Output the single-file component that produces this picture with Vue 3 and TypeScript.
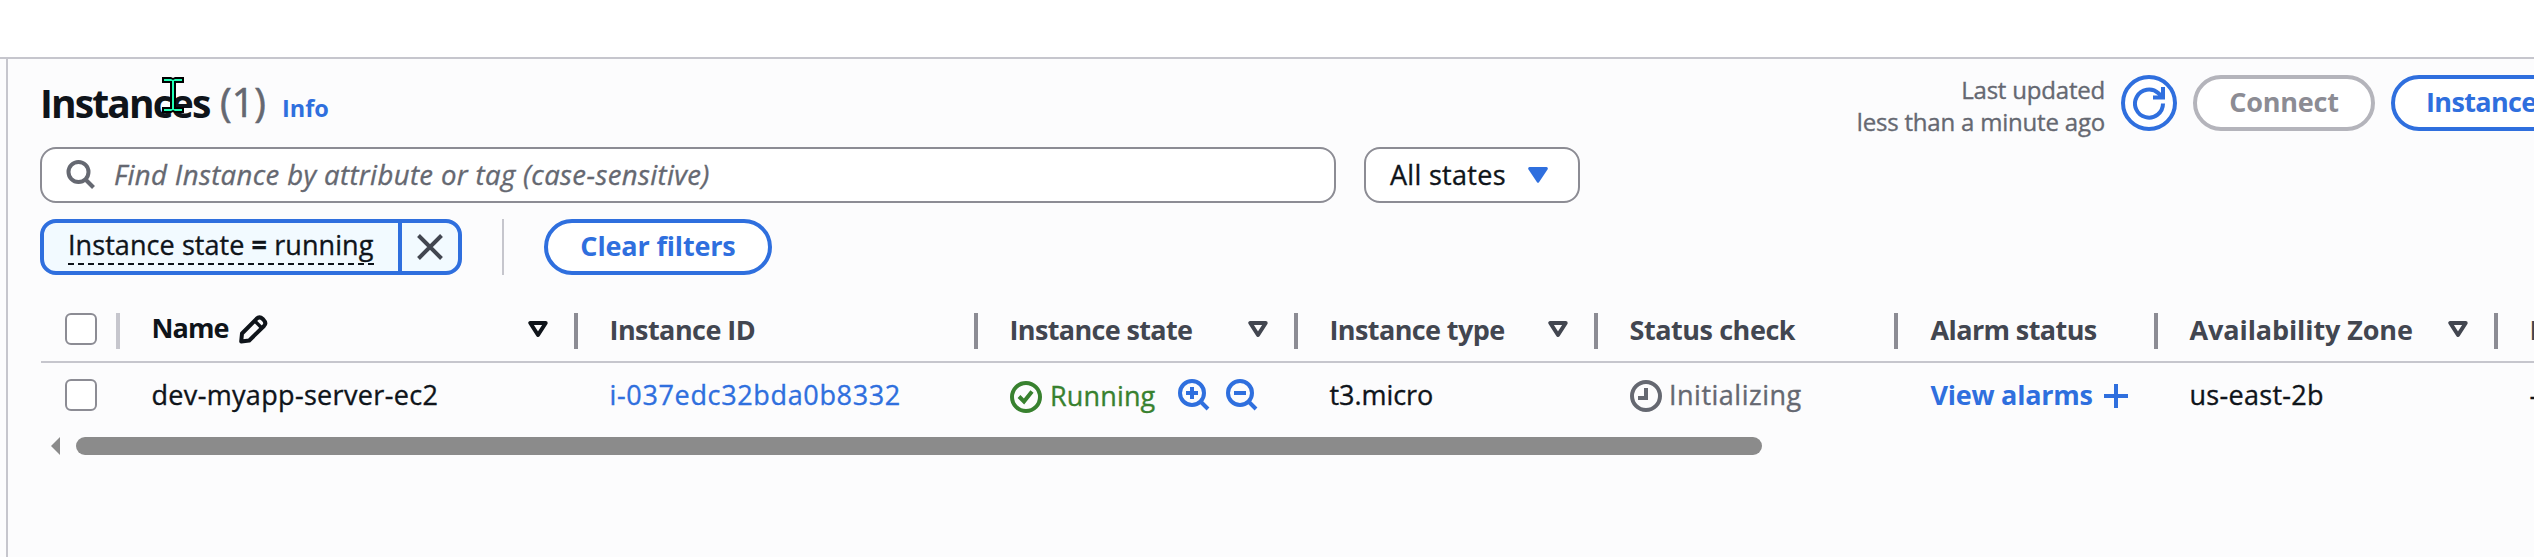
<script setup lang="ts">
import { ref } from 'vue'

interface Column {
  key: string
  label: string
  sortable?: boolean
  editable?: boolean
}

const columns: Column[] = [
  { key: 'name', label: 'Name', sortable: true, editable: true },
  { key: 'id', label: 'Instance ID' },
  { key: 'state', label: 'Instance state', sortable: true },
  { key: 'type', label: 'Instance type', sortable: true },
  { key: 'check', label: 'Status check' },
  { key: 'alarm', label: 'Alarm status' },
  { key: 'zone', label: 'Availability Zone', sortable: true },
  { key: 'dns', label: 'Public IPv4 DNS' },
]

const query = ref('')
</script>

<template>
  <main class="page">
    <section class="panel">
      <header class="header">
        <h1 class="title">Instances</h1>
        <span class="count">(1)</span>
        <a class="info">Info</a>
        <div class="actions">
          <p class="updated"><span class="up1">Last updated</span><br /><span class="up2">less than a minute ago</span></p>
          <button class="btn round" aria-label="Refresh">
            <svg width="32" height="33" viewBox="0 0 32 33" fill="none">
              <path d="M30 16.5A14 14 0 1 1 25.5 6.3L29 9.8" stroke="currentColor" stroke-width="4" />
              <path d="M28 0h4v12.500H20v-4h5L28 6z" fill="currentColor" />
            </svg>
          </button>
          <button class="btn disabled" disabled>Connect</button>
          <button class="btn state-btn">Instance state</button>
        </div>
      </header>

      <div class="filters">
        <label class="search">
          <svg width="30" height="30" viewBox="0 0 30 30" fill="none" stroke="#656871" stroke-width="4">
            <circle cx="12.500" cy="12" r="10" />
            <path d="M19.500 19.500 27.500 27.500" />
          </svg>
          <span v-if="!query" class="placeholder">Find Instance by attribute or tag (case-sensitive)</span>
        </label>
        <button class="select">
          <span>All states</span>
          <svg width="20" height="16" viewBox="0 0 20 16"><path d="M1.500 0h17q2 .6 1 2.500L11 15.300q-1 1-2 0L.5 2.500Q-.5.6 1.500 0z" fill="#2f6fde" /></svg>
        </button>
      </div>

      <div class="tokens">
        <div class="token">
          <span class="token-body"><span class="token-text">Instance state <b>=</b> running</span></span>
          <button class="token-x" aria-label="Remove filter">
            <svg width="26" height="26" viewBox="0 0 26 26"><path d="M1.500 1.500 24.500 24.500M24.500 1.500 1.500 24.500" stroke="#424650" stroke-width="4" /></svg>
          </button>
        </div>
        <i class="divider"></i>
        <button class="btn clear">Clear filters</button>
      </div>

      <div class="table">
        <div class="row head">
          <div class="cell pick"><i class="box"></i></div>
          <div v-for="c in columns" :key="c.key" class="cell" :class="[c.key, { active: c.editable }]">
            <span class="label">{{ c.label }}</span>
            <svg v-if="c.editable" class="pencil" width="29" height="29" viewBox="0 0 29 29" fill="none" stroke="currentColor" stroke-width="4" stroke-linejoin="round">
              <path d="M2.200 26.500 3 18.500 17.500 3.800Q20.500.9 23.800 4L24.600 4.800Q27.800 8 25 11L10.200 25.500z" />
              <path d="M15.800 6 22.800 13" stroke-width="3.400" />
            </svg>
            <svg v-if="c.sortable" class="sort" width="20" height="17" viewBox="0 0 20 17" fill="none" stroke="currentColor" stroke-width="4" stroke-linejoin="round">
              <path d="M2.300 2h15.400L10 14z" />
            </svg>
          </div>
        </div>

        <div class="row body">
          <div class="cell pick"><i class="box"></i></div>
          <div class="cell name"><span class="v-name">dev-myapp-server-ec2</span></div>
          <div class="cell id"><a class="v-id">i-037edc32bda0b8332</a></div>
          <div class="cell state">
            <svg class="ok" width="32" height="32" viewBox="0 0 32 32" fill="none" stroke="currentColor" stroke-width="4">
              <circle cx="16" cy="16" r="14" />
              <path d="M9 15.500 14 20.500 22 10.500" />
            </svg>
            <span class="v-run">Running</span>
            <svg class="mag" width="32" height="32" viewBox="0 0 32 32" fill="none" stroke="currentColor" stroke-width="4">
              <circle cx="14" cy="14" r="12" /><path d="M22.500 22.500 30 30M8 14h12M14 8v12" />
            </svg>
            <svg class="mag second" width="32" height="32" viewBox="0 0 32 32" fill="none" stroke="currentColor" stroke-width="4">
              <circle cx="14" cy="14" r="12" /><path d="M22.500 22.500 30 30M8 14h12" />
            </svg>
          </div>
          <div class="cell type"><span class="v-type">t3.micro</span></div>
          <div class="cell check">
            <svg class="clock" width="32" height="32" viewBox="0 0 32 32" fill="none" stroke="currentColor" stroke-width="4">
              <circle cx="16" cy="16" r="14" /><path d="M16 8v10H8" />
            </svg>
            <span class="v-init">Initializing</span>
          </div>
          <div class="cell alarm">
            <a class="v-alarm">View alarms</a>
            <svg class="plus" width="24" height="24" viewBox="0 0 24 24" stroke="currentColor" stroke-width="4"><path d="M12 0v24M0 12h24" /></svg>
          </div>
          <div class="cell zone"><span class="v-zone">us-east-2b</span></div>
          <div class="cell dns"><span>–</span></div>
        </div>
      </div>

      <div class="scroll">
        <svg width="9" height="18" viewBox="0 0 9 18"><path d="M9 0v18L0 9z" fill="#8b8b8b" /></svg>
        <i class="thumb"></i>
      </div>
    </section>

    <svg class="pointer" width="22" height="36" viewBox="0 0 22 36">
      <path d="M0 0h9l2 1 2-1h9v6h-8v24h8v6h-9l-2-1-2 1H0v-6h8V6H0z" fill="#000" />
      <path d="M2 2h7l2 1 2-1h7v2h-8v28h8v2h-7l-2-1-2 1H2v-2h8V4H2z" fill="#1fffb4" />
    </svg>
  </main>
</template>

<style>
body {
  margin: 0;
  overflow: hidden;
}
</style>

<style scoped>
.page {
  box-sizing: border-box;
  position: relative;
  width: 100vw;
  height: 557px;
  padding: 57px 0 0 6px;
  overflow: hidden;
  color: #0f141a;
  font: 400 27px/36px 'Open Sans', 'Noto Sans', sans-serif;
  -webkit-text-stroke: 0.35px currentColor;
  background: linear-gradient(#fff 57px, #c6c6cd 57px, #c6c6cd 59px, #fcfcfd 59px);
}
.title,
.info,
.btn,
.head,
.v-alarm {
  -webkit-text-stroke-width: 0;
}
.panel {
  box-sizing: border-box;
  height: 500px;
  padding: 18px 0 0 32px;
  border-left: 2px solid #c6c6cd;
}
.header {
  display: flex;
  width: 2494px;
  height: 56px;
  margin-bottom: 16px;
}
.title {
  margin: 0;
  width: 180px;
  font-size: 39px;
  font-weight: 700;
  line-height: 55px;
  letter-spacing: -1.9px;
}
.count {
  width: 62px;
  color: #656871;
  font-size: 39.5px;
  line-height: 54px;
  -webkit-text-stroke-width: 0.6px;
}
.info {
  color: #2f6fde;
  font-size: 23.5px;
  font-weight: 700;
  line-height: 66px;
}
.actions {
  display: flex;
  margin-left: auto;
  white-space: nowrap;
}
.updated {
  margin: -1px 16px 0 0;
  color: #656871;
  font-size: 24px;
  line-height: 32px;
  text-align: right;
}
.up1 { letter-spacing: -0.2px; }
.up2 { letter-spacing: -0.2px; }
.btn {
  box-sizing: border-box;
  flex: none;
  height: 56px;
  padding: 0;
  border: 4px solid #2f6fde;
  border-radius: 28px;
  color: #2f6fde;
  background: #fff;
  font: 700 27px/44px 'Open Sans', 'Noto Sans', sans-serif;
  text-align: center;
  white-space: nowrap;
}
.btn:not(.round) {
  padding-bottom: 3px;
}
.round {
  display: grid;
  width: 56px;
  place-items: center;
}
.disabled {
  width: 182px;
  margin: 0 16px;
  border-color: #b4b4bb;
  color: #8c8c94;
  letter-spacing: -0.2px;
}
.state-btn {
  width: 290px;
  margin-right: -147px;
  padding-left: 31px;
  text-align: left;
  letter-spacing: -0.65px;
}
.filters {
  display: flex;
  gap: 28px;
  height: 56px;
}
.search,
.select {
  box-sizing: border-box;
  display: flex;
  align-items: center;
  height: 56px;
  border: 2px solid #8c8c94;
  border-radius: 16px;
  background: #fff;
}
.search {
  width: 1296px;
  padding-left: 24px;
}
.placeholder {
  margin-left: 18px;
  color: #656871;
  font-size: 27.5px;
  font-style: italic;
  letter-spacing: 0.38px;
}
.select {
  justify-content: space-between;
  width: 216px;
  padding: 0 30px 0 24px;
  color: #0f141a;
  font: 400 27px/36px 'Open Sans', 'Noto Sans', sans-serif;
  letter-spacing: 0.3px;
}
.tokens {
  display: flex;
  height: 56px;
  margin-top: 16px;
}
.token {
  box-sizing: border-box;
  display: flex;
  width: 422px;
  border: 4px solid #2f6fde;
  border-radius: 16px;
  background: #f2faff;
}
.token-body {
  box-sizing: border-box;
  flex: none;
  width: 358px;
  padding-left: 24px;
  border-right: 4px solid #2f6fde;
}
.token-text {
  display: block;
  width: 306px;
  height: 40px;
  border-bottom: 2px dashed #0f141a;
  line-height: 44px;
  letter-spacing: 0.07px;
  white-space: nowrap;
}
.token-x {
  display: grid;
  flex: 1;
  padding: 0;
  border: 0;
  background: none;
  place-items: center;
}
.divider {
  width: 2px;
  margin: 0 40px;
  background: #c6c6cd;
}
.clear {
  width: 228px;
  letter-spacing: -0.15px;
}
.table {
  margin: 20px 0 0 1px;
}
.row {
  display: grid;
  grid-template-columns: 79px 458px 400px 320px 300px 300px 260px 340px 300px;
  white-space: nowrap;
}
.head {
  height: 66px;
  border-bottom: 2px solid #c6c6cd;
  color: #424650;
  font-weight: 700;
}
.body {
  height: 64px;
}
.cell {
  position: relative;
  display: flex;
  align-items: center;
  padding-left: 31.5px;
}
.pick {
  padding-left: 24px;
}
.alarm {
  padding-left: 32.5px;
}
.head .cell::after {
  content: '';
  position: absolute;
  top: 18px;
  right: 0;
  width: 4px;
  height: 36px;
  background: #8c8c94;
}
.head .pick::after {
  background: #c6c6cd;
}
.head .label {
  margin-top: 3px;
}
.head .active .label {
  margin-top: -1px;
}
.active {
  color: #0f141a;
}
.box {
  box-sizing: border-box;
  width: 32px;
  height: 32px;
  border: 2px solid #8c8c94;
  border-radius: 6px;
  background: #fff;
}
.head .box {
  margin-top: 2px;
}
.pencil {
  margin: 6px 0 4px 10px;
}
.sort {
  margin: 5px 30px 3px auto;
}
.name .label { letter-spacing: -0.9px; }
.id .label { letter-spacing: -0.55px; }
.state .label { letter-spacing: -0.65px; }
.type .label { letter-spacing: -0.6px; }
.check .label { letter-spacing: -0.45px; }
.alarm .label { letter-spacing: -0.6px; }
.zone .label { letter-spacing: -0.1px; }
.v-name { letter-spacing: 0.33px; }
.v-id {
  color: #2f6fde;
  letter-spacing: 0.65px;
}
.ok {
  margin: 4px 8px 0 0.5px;
  color: #38812f;
}
.v-run {
  width: 128px;
  margin-top: 2px;
  color: #38812f;
  letter-spacing: 0.15px;
}
.mag {
  color: #2f6fde;
}
.second {
  margin-left: 16px;
}
.clock {
  margin: 2px 7px 0 0.5px;
  color: #656871;
}
.v-init {
  color: #656871;
  letter-spacing: 0.5px;
}
.v-type { letter-spacing: -0.05px; }
.v-zone { letter-spacing: 0.3px; }
.v-alarm {
  color: #2f6fde;
  font-weight: 700;
  letter-spacing: -0.25px;
}
.plus {
  margin: 2px 0 0 11px;
  color: #2f6fde;
}
.scroll {
  display: flex;
  gap: 16px;
  height: 18px;
  margin: 10px 0 0 11px;
}
.thumb {
  width: 1686px;
  border-radius: 9px;
  background: #8b8b8b;
}
.pointer {
  position: absolute;
  top: 77px;
  left: 162px;
}
</style>
